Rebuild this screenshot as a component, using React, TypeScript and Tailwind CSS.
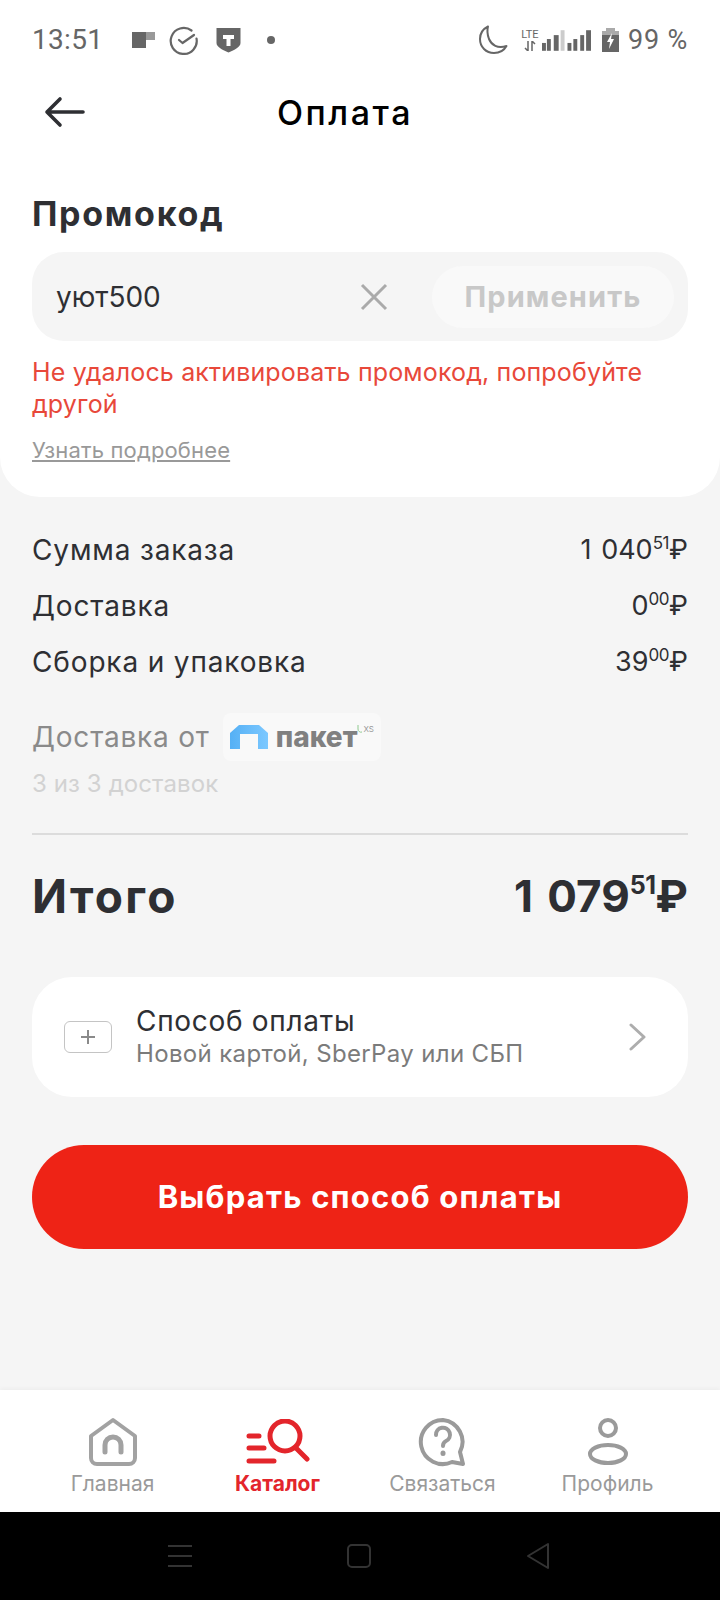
const F = "[font-family:Inter,'Noto_Sans',sans-serif]";

function Price({ rub, kop, big }: { rub: string; kop: string; big?: boolean }) {
  if (big) {
    return (
      <div className="flex items-start text-[44px] leading-[52px] font-bold text-[#2e2f33]">
        <span className="[word-spacing:4px]">{rub}</span>
        <span className="text-[25px] leading-[30px] tracking-tight">{kop}</span>
        <span>₽</span>
      </div>
    );
  }
  return (
    <div className="flex items-start text-[27px] leading-[36px] text-[#2e2f33]">
      <span className="[word-spacing:2px]">{rub}</span>
      <span className="text-[17px] leading-[22px] tracking-tight">{kop}</span>
      <span>₽</span>
    </div>
  );
}

function Row({ label, rub, kop }: { label: string; rub: string; kop: string }) {
  return (
    <div className="flex h-[56px] items-center justify-between">
      <span className="text-[28px] tracking-[0.85px] text-[#2e2f33]">{label}</span>
      <Price rub={rub} kop={kop} />
    </div>
  );
}

function NavItem({ label, active, children }: { label: string; active?: boolean; children: React.ReactNode }) {
  return (
    <div className="flex flex-col items-center">
      <div className="flex h-[52px] items-center justify-center">{children}</div>
      <span className={active ? "mt-[2px] text-[21px] leading-[28px] font-bold text-[#e3252b]" : "mt-[2px] text-[21px] leading-[28px] text-[#9a9a9a]"}>{label}</span>
    </div>
  );
}

function StatusBar() {
  return (
    <div className="flex h-[80px] items-center justify-between pl-[32px] pr-[32px] [font-family:Roboto,sans-serif] text-[#666]">
      <div className="flex items-center">
        <span className="w-[100px] text-[28px] tracking-[0.3px]">13:51</span>
        <svg width="23" height="16" viewBox="0 0 23 16" className="mr-[14px]"><rect x="0" y="0" width="14" height="16" fill="#666" /><rect x="14" y="0" width="9" height="8" fill="#999" /></svg>
        <svg width="30" height="30" viewBox="0 0 30 30" className="mr-[17px]" fill="none" stroke="#666" strokeWidth="2.2" strokeLinecap="round" strokeLinejoin="round"><path d="M27.500 13.500a13 13 0 1 1-5-8" /><path d="M10 15l3.500 3L25 10" /></svg>
        <svg width="25" height="26" viewBox="0 0 25 26" className="mr-[26px]"><path d="M0.500 1h24v15c0 4-6 7-12 9.500C6.500 23 0.500 20 0.500 16z" fill="#666" /><path d="M7 8h11v4h-3.500v7h-4v-7H7z" fill="#fff" /></svg>
        <span className="h-[8px] w-[8px] rounded-full bg-[#666]" />
      </div>
      <div className="flex items-center">
        <svg width="30" height="30" viewBox="0 0 30 30" className="mr-[12px]" fill="none" stroke="#666" strokeWidth="2" strokeLinejoin="round"><path d="M10 1.500C5 4 2 8.500 2 14c0 8 6 14 14 14 5.500 0 10-2.500 12.500-7-9 3-15-1-17.500-7C9.500 10 9 5 10 1.500z" /></svg>
        <div className="mr-[2px] flex w-[20px] flex-col items-center">
          <span className="text-[11px] leading-[12px]">LTE</span>
          <svg width="12" height="10" viewBox="0 0 12 10"><path d="M4 0v10M1 7l3 3M8 10V0M8 0l3 3" stroke="#666" strokeWidth="1.500" fill="none" /></svg>
        </div>
        <svg width="49" height="21" viewBox="0 0 50 21" className="mr-[11px]" fill="#666"><rect x="0" y="13" width="4" height="8" /><rect x="5" y="9" width="4" height="12" /><rect x="12" y="5" width="5" height="16" /><rect x="19" y="0" width="4" height="21" fill="#ccc" /><rect x="26" y="13" width="4" height="8" /><rect x="32" y="9" width="4" height="12" /><rect x="39" y="5" width="4" height="16" /><rect x="45" y="0" width="5" height="21" /></svg>
        <svg width="17" height="24" viewBox="0 0 17 24" className="mr-[9px]"><rect x="4" y="0" width="9" height="3" fill="#aaa" /><rect x="0" y="3" width="17" height="4" fill="#aaa" /><rect x="0" y="7" width="17" height="17" fill="#666" /><path d="M10 5L5 14h3l-1 7 5-10H9z" fill="#fff" /></svg>
        <span className="text-[27px] tracking-[0.8px]">99 %</span>
      </div>
    </div>
  );
}

export default function App() {
  return (
    <div className={`flex h-[1600px] w-[720px] flex-col overflow-hidden bg-[#f5f5f5] ${F}`}>
      <div className="rounded-b-[40px] bg-white">
        <StatusBar />
        <div className="flex h-[64px] items-center pl-[44px]">
          <svg width="42" height="32" viewBox="0 0 42 32" fill="none" stroke="#2e2f33" strokeWidth="3.600" strokeLinecap="round" strokeLinejoin="round"><path d="M39 16H3M16 3L3 16l13 13" /></svg>
          <span className="ml-[191px] text-[34px] font-medium tracking-[2.500px] text-black">Оплата</span>
        </div>
        <div className="px-[32px] pb-[33px] pt-[50px]">
          <div className="text-[34px] leading-[40px] font-bold tracking-[1.700px] text-[#2e2f33]">Промокод</div>
          <div className="mt-[18px] flex h-[89px] items-center rounded-[32px] bg-[#f5f5f5] pl-[24px] pr-[14px]">
            <span className="grow text-[28px] text-[#2e2f33]">уют500</span>
            <svg width="28" height="28" viewBox="0 0 28 28" className="mr-[44px]" fill="none" stroke="#aaa" strokeWidth="3"><path d="M2 2l24 24M26 2L2 26" /></svg>
            <div className="flex h-[62px] w-[242px] items-center justify-center rounded-full bg-[#f9f9f9] text-[29px] font-bold tracking-[1.100px] text-[#c8c8c8]">Применить</div>
          </div>
          <div className="mt-[15px] text-[25px] leading-[32px] tracking-[0.150px] text-[#e8483a]">Не удалось активировать промокод, попробуйте другой</div>
          <div className="mt-[16px] text-[22px] leading-[28px] tracking-[0.150px] text-[#999] underline">Узнать подробнее</div>
        </div>
      </div>

      <div className="flex grow flex-col px-[32px] pt-[25px]">
        <Row label="Сумма заказа" rub="1 040" kop="51" />
        <Row label="Доставка" rub="0" kop="00" />
        <Row label="Сборка и упаковка" rub="39" kop="00" />
        <div className="mt-[21px] flex h-[52px] items-center">
          <span className="text-[28px] tracking-[0.800px] text-[#8a8a8a]">Доставка от</span>
          <div className="ml-[13px] flex h-[48px] items-center rounded-[8px] bg-[#f9f9f9] px-[7px]">
            <svg width="38" height="24" viewBox="0 0 38 24"><defs><linearGradient id="g" x1="0" x2="1"><stop offset="0" stopColor="#55b0f5" /><stop offset="1" stopColor="#7cc8ff" /></linearGradient></defs><path d="M9 0h20l9 8v16H28V9H10v15H0V8z" fill="url(#g)" /></svg>
            <span className="ml-[8px] text-[28px] leading-[28px] font-extrabold text-[#808080]">пакет</span>
            <div className="mb-[16px] flex items-start">
              <svg width="6" height="8" viewBox="0 0 6 8" fill="none" stroke="#8fc98f" strokeWidth="1"><path d="M1 0v4a3 3 0 0 0 4 3" /></svg>
              <span className="text-[8px] leading-[8px] text-[#999]">XS</span>
            </div>
          </div>
        </div>
        <div className="mt-[6px] text-[24px] leading-[30px] tracking-[0.100px] text-[#d2d2d2]">3 из 3 доставок</div>
        <div className="mt-[34px] h-[2px] bg-[#dcdcdc]" />
        <div className="mt-[35px] flex items-center justify-between">
          <span className="text-[46px] leading-[52px] font-bold tracking-[2.300px] text-[#2e2f33]">Итого</span>
          <Price big rub="1 079" kop="51" />
        </div>
        <div className="mt-[55px] flex h-[120px] items-center rounded-[40px] bg-white pl-[32px] pr-[41px]">
          <div className="flex h-[32px] w-[48px] items-center justify-center rounded-[6px] border border-[#c4c4c4]">
            <svg width="14" height="14" viewBox="0 0 14 14" stroke="#8a8a8a" strokeWidth="2"><path d="M7 0v14M0 7h14" /></svg>
          </div>
          <div className="ml-[24px] grow">
            <div className="text-[28px] leading-[34px] tracking-[0.700px] text-[#2e2f33]">Способ оплаты</div>
            <div className="text-[24px] leading-[32px] tracking-[0.350px] text-[#7b7b7b]">Новой картой, SberPay или СБП</div>
          </div>
          <svg width="18" height="28" viewBox="0 0 18 28" fill="none" stroke="#adadad" strokeWidth="3" strokeLinecap="round" strokeLinejoin="round"><path d="M2 2l13 12L2 26" /></svg>
        </div>
        <div className="mt-[48px] flex h-[104px] items-center justify-center rounded-full bg-[#ee2316] text-[31px] font-bold tracking-[1.200px] text-white">Выбрать способ оплаты</div>
      </div>

      <div className="grid h-[122px] grid-cols-4 bg-white px-[30px] pt-[26px] shadow-[0_-2px_4px_rgba(0,0,0,0.03)]">
        <NavItem label="Главная">
          <svg width="50" height="50" viewBox="0 0 50 50" fill="none" stroke="#a2a2a2" strokeWidth="4" strokeLinecap="round" strokeLinejoin="round"><path d="M3 19L25 3l22 16v22a6 6 0 0 1-6 6H9a6 6 0 0 1-6-6z" /><path d="M17 35v-7a8 8 0 0 1 16 0v7" strokeWidth="5" /></svg>
        </NavItem>
        <NavItem label="Каталог" active>
          <svg width="64" height="46" viewBox="0 0 64 46" fill="none" stroke="#e3252b" strokeLinecap="round"><circle cx="39" cy="17" r="15" strokeWidth="5" /><path d="M50 29l11 11" strokeWidth="5" /><path d="M3 17h10M3 29h15M3 42h25" strokeWidth="5" /></svg>
        </NavItem>
        <NavItem label="Связаться">
          <svg width="50" height="50" viewBox="0 0 50 50" fill="none" stroke="#9a9a9a" strokeWidth="4" strokeLinecap="round" strokeLinejoin="round"><path d="M25 3a22 22 0 1 0 9 42l11 2-3-12A22 22 0 0 0 25 3z" /><path d="M18 18a7 7 0 1 1 10 6c-2 1-3 2-3 5" /><path d="M25 36v0.500" strokeWidth="5" /></svg>
        </NavItem>
        <NavItem label="Профиль">
          <svg width="42" height="48" viewBox="0 0 42 48" fill="none" stroke="#9a9a9a" strokeWidth="4"><circle cx="21" cy="10" r="8" /><ellipse cx="21" cy="36" rx="18" ry="9" /></svg>
        </NavItem>
      </div>
      <div className="flex h-[88px] items-center justify-between bg-black pl-[168px] pr-[170px]">
        <svg width="24" height="22" viewBox="0 0 24 22" stroke="#333" strokeWidth="2"><path d="M0 1h24M0 11h24M0 21h24" /></svg>
        <svg width="24" height="24" viewBox="0 0 24 24" fill="none" stroke="#333" strokeWidth="2"><rect x="1" y="1" width="22" height="22" rx="4" /></svg>
        <svg width="24" height="28" viewBox="0 0 24 28" fill="none" stroke="#333" strokeWidth="2" strokeLinejoin="round"><path d="M22 2v24L2 14z" /></svg>
      </div>
    </div>
  );
}
